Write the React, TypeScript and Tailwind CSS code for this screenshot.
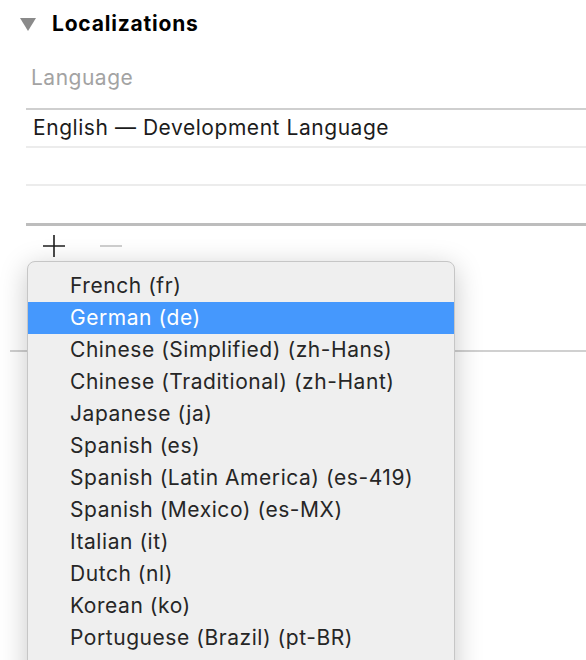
import React from "react";

const items = [
  "French (fr)",
  "German (de)",
  "Chinese (Simplified) (zh-Hans)",
  "Chinese (Traditional) (zh-Hant)",
  "Japanese (ja)",
  "Spanish (es)",
  "Spanish (Latin America) (es-419)",
  "Spanish (Mexico) (es-MX)",
  "Italian (it)",
  "Dutch (nl)",
  "Korean (ko)",
  "Portuguese (Brazil) (pt-BR)",
];

export default function App() {
  return (
    <div
      className="relative w-[586px] h-[660px] overflow-hidden bg-white text-[#262626]"
      style={{ fontFamily: "Inter, 'Noto Sans', sans-serif" }}
    >
      <div className="flex items-center h-[48px] pl-[20px]">
        <svg width="16" height="14" viewBox="0 0 16 14" className="mr-[16px]">
          <polygon points="0,1 16,1 8,14" fill="#8a8a8a" />
        </svg>
        <span className="text-[21px] font-bold text-black tracking-[0.8px]">Localizations</span>
      </div>
      <div className="pl-[26px]">
        <div className="h-[62px] flex items-center pl-[5px] border-b-2 border-[#cfcfcf] text-[21px] tracking-[0.5px] text-[#a3a3a3]">
          Language
        </div>
        <div className="h-[38px] flex items-center pl-[7px] border-b-2 border-[#ececec] text-[21px] tracking-[0.55px] text-[#1c1c1c]">
          English — Development Language
        </div>
        <div className="h-[38px] border-b-2 border-[#ececec]" />
        <div className="h-[40px] border-b-[3px] border-[#bdbdbd]" />
        <div className="h-[40px] flex items-center">
          <svg width="24" height="24" viewBox="0 0 24 24" className="ml-[16px]">
            <path d="M12 1v22M1 12h22" stroke="#1e1e1e" strokeWidth="1.6" />
          </svg>
          <svg width="24" height="24" viewBox="0 0 24 24" className="ml-[33px]">
            <path d="M1 12h22" stroke="#c4c4c4" strokeWidth="1.6" />
          </svg>
        </div>
      </div>
      <div className="mt-[84px] ml-[10px] border-t-2 border-[#d0d0d0]" />

      <div className="absolute left-[27px] top-[261px] w-[428px] h-[440px] rounded-[8px] border border-[#c6c6c6] bg-[#efefef] pt-[8px] shadow-[0_6px_28px_rgba(0,0,0,0.22)]">
        {items.map((t, i) => (
          <div
            key={t}
            className={
              i === 1
                ? "h-[32px] flex items-center pl-[42px] text-[21px] tracking-[0.55px] bg-[#4598fd] text-white"
                : "h-[32px] flex items-center pl-[42px] text-[21px] tracking-[0.55px] text-[#262626]"
            }
          >
            {t}
          </div>
        ))}
      </div>
    </div>
  );
}
